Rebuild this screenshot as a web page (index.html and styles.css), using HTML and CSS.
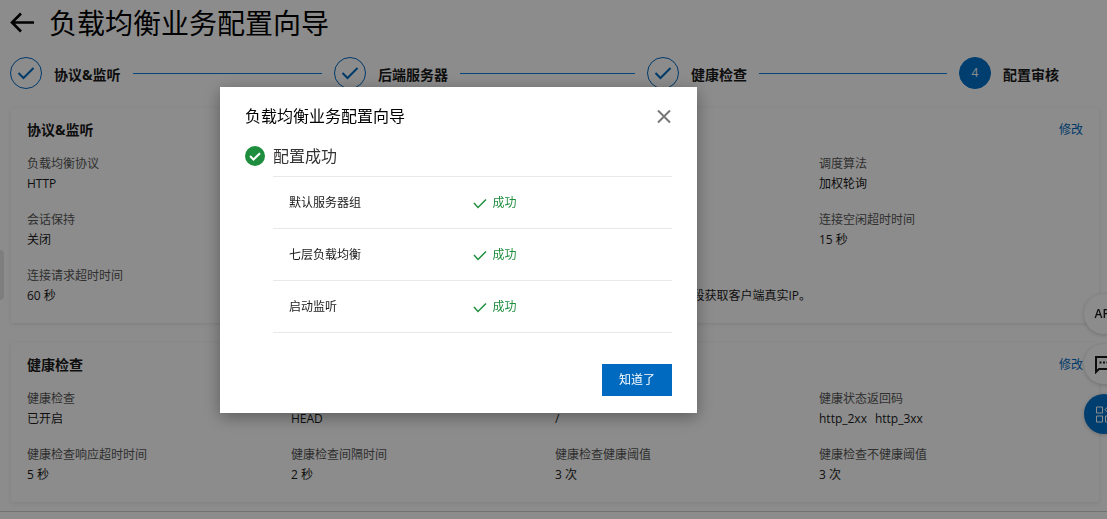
FILE: index.html
```html
<!DOCTYPE html>
<html lang="zh-CN">
<head>
<meta charset="utf-8">
<title>负载均衡业务配置向导</title>
<link rel="stylesheet" href="styles.css">
</head>
<body>
<div class="page">
  <header class="page-header">
    <button class="back" aria-label="返回">
      <svg width="24" height="22" viewBox="0 0 24 22"><path d="M11 1.500 2 10.500l9 9M2 10.500h22" fill="none" stroke="currentColor" stroke-width="2.600"/></svg>
    </button>
    <h1 class="page-title">负载均衡业务配置向导</h1>
  </header>

  <ol class="steps">
    <li class="step">
      <span class="step-mark"><svg width="18" height="14" viewBox="0 0 18 14"><path d="M1.5 7 6.500 12 16.500 2" fill="none" stroke="currentColor" stroke-width="2"/></svg></span>
      <span class="step-label">协议&amp;监听</span><span class="step-line"></span>
    </li>
    <li class="step">
      <span class="step-mark"><svg width="18" height="14" viewBox="0 0 18 14"><path d="M1.5 7 6.500 12 16.500 2" fill="none" stroke="currentColor" stroke-width="2"/></svg></span>
      <span class="step-label">后端服务器</span><span class="step-line"></span>
    </li>
    <li class="step">
      <span class="step-mark"><svg width="18" height="14" viewBox="0 0 18 14"><path d="M1.5 7 6.500 12 16.500 2" fill="none" stroke="currentColor" stroke-width="2"/></svg></span>
      <span class="step-label">健康检查</span><span class="step-line"></span>
    </li>
    <li class="step">
      <span class="step-mark current">4</span>
      <span class="step-label">配置审核</span>
    </li>
  </ol>

  <main class="cards">
    <section class="card">
      <div class="card-head"><h2 class="card-title">协议&amp;监听</h2><a class="link" href="#">修改</a></div>
      <dl class="fields">
        <div class="field first"><dt>负载均衡协议</dt><dd>HTTP</dd></div>
        <div class="field last"><dt>调度算法</dt><dd>加权轮询</dd></div>
        <div class="field first"><dt>会话保持</dt><dd>关闭</dd></div>
        <div class="field last"><dt>连接空闲超时时间</dt><dd>15 秒</dd></div>
        <div class="field first"><dt>连接请求超时时间</dt><dd>60 秒</dd></div>
        <div class="field note"><dt>&nbsp;</dt><dd>字段获取客户端真实IP。</dd></div>
      </dl>
    </section>
    <section class="card">
      <div class="card-head"><h2 class="card-title">健康检查</h2><a class="link" href="#">修改</a></div>
      <dl class="fields">
        <div class="field"><dt>健康检查</dt><dd>已开启</dd></div>
        <div class="field"><dt>&nbsp;</dt><dd>HEAD</dd></div>
        <div class="field"><dt>&nbsp;</dt><dd>/</dd></div>
        <div class="field"><dt>健康状态返回码</dt><dd class="codes"><span>http_2xx</span><span>http_3xx</span></dd></div>
        <div class="field"><dt>健康检查响应超时时间</dt><dd>5 秒</dd></div>
        <div class="field"><dt>健康检查间隔时间</dt><dd>2 秒</dd></div>
        <div class="field"><dt>健康检查健康阈值</dt><dd>3 次</dd></div>
        <div class="field"><dt>健康检查不健康阈值</dt><dd>3 次</dd></div>
      </dl>
    </section>
  </main>
  <footer class="page-footer"></footer>
</div>

<div class="drawer-handle"></div>
<div class="fabs">
  <button class="fab api">API</button>
  <button class="fab" aria-label="反馈">
    <svg width="20" height="20" viewBox="0 0 20 20"><path d="M2 18V3h16v12H5z" fill="none" stroke="currentColor" stroke-width="2"/><path d="M5.500 8.500h2m1.500 0h2m1.500 0h2" stroke="currentColor" stroke-width="2"/></svg>
  </button>
  <button class="fab primary" aria-label="应用">
    <svg width="18" height="18" viewBox="0 0 18 18" fill="none" stroke="currentColor"><path d="M1.500 2h6v6h-6zM1.500 11h6v6h-6zM10.500 11h6v6h-6zM13.500 1l3.500 3.700-3.500 3.700L10 4.700z"/></svg>
  </button>
</div>

<div class="overlay">
  <div class="dialog" role="dialog" aria-modal="true" aria-labelledby="dialog-title">
    <div class="dialog-head">
      <h2 class="dialog-title" id="dialog-title">负载均衡业务配置向导</h2>
      <button class="close" aria-label="关闭">
        <svg width="16" height="16" viewBox="0 0 16 16"><path d="m2 2.500 12 12M14 2.500 2 14.500" fill="none" stroke="currentColor" stroke-width="2"/></svg>
      </button>
    </div>
    <div class="result">
      <svg width="20" height="20" viewBox="0 0 20 20"><circle cx="10" cy="10" r="10" fill="#1e8e3e"/><path d="m5 10 3.500 3.500L15 7.200" fill="none" stroke="#fff" stroke-width="2"/></svg>
      <span>配置成功</span>
    </div>
    <table class="results">
      <tr><td class="name">默认服务器组</td><td><span class="ok"><svg width="14" height="12" viewBox="0 0 14 12"><path d="m1 6 4 4.500 8-8" fill="none" stroke="currentColor" stroke-width="1.500"/></svg>成功</span></td></tr>
      <tr><td class="name">七层负载均衡</td><td><span class="ok"><svg width="14" height="12" viewBox="0 0 14 12"><path d="m1 6 4 4.500 8-8" fill="none" stroke="currentColor" stroke-width="1.500"/></svg>成功</span></td></tr>
      <tr><td class="name">启动监听</td><td><span class="ok"><svg width="14" height="12" viewBox="0 0 14 12"><path d="m1 6 4 4.500 8-8" fill="none" stroke="currentColor" stroke-width="1.500"/></svg>成功</span></td></tr>
    </table>
    <div class="dialog-foot"><button class="confirm">知道了</button></div>
  </div>
</div>
</body>
</html>
```
FILE: styles.css
```css
* { box-sizing: border-box; }

body {
  margin: 0;
  background: #fff;
  color: #1a1a1a;
  font: 12px/20px "Open Sans", "Noto Sans CJK SC", sans-serif;
}

h1, h2, dl, dd, ol { margin: 0; padding: 0; }

button {
  border: 0;
  padding: 0;
  background: none;
  color: inherit;
  font: inherit;
}

.page { overflow: hidden; }

.page-header {
  display: flex;
  align-items: center;
  gap: 15px;
  height: 44px;
  padding: 2px 10px 0;
}

.back { display: flex; color: #000; }

.page-title { font-size: 28px; line-height: 40px; font-weight: 400; color: #000; }

.steps {
  display: grid;
  grid-template-columns: 324fr 313fr 312fr 138fr;
  padding: 13px 10px 0;
  list-style: none;
}

.step { display: flex; align-items: center; gap: 12px; padding-right: 12px; }

.step-mark {
  display: flex;
  flex: none;
  align-items: center;
  justify-content: center;
  width: 32px;
  height: 32px;
  border: 1px solid #006ac1;
  border-radius: 50%;
  color: #006ac1;
}

.step-mark.current { background: #0072cc; border-color: #0072cc; color: #fff; }

.step-label {
  flex: none;
  padding-top: 3px;
  font-size: 14px;
  font-weight: 700;
}

.step-line { flex: 1; height: 1px; background: #0a7fe0; }

.cards { display: grid; gap: 20px; padding: 19px 8px 9px 11px; }

.card {
  padding: 12px 16px 17px;
  background: #fff;
  border-radius: 2px;
  box-shadow: 0 1px 4px rgba(0, 0, 0, .1);
}

.card-head { display: flex; justify-content: space-between; margin-bottom: 14px; }

.card-title { font-size: 14px; line-height: 20px; font-weight: 700; }

.link { color: #006ac1; text-decoration: none; }

.fields { display: grid; grid-template-columns: repeat(4, 1fr); row-gap: 16px; }

.field dt { color: #575757; }

.first { grid-column: 1; }
.last { grid-column: 4; }
.note { grid-column: 2 / 4; justify-self: end; padding-right: 8px; }

.codes { display: flex; gap: 8px; }

.page-footer { height: 9px; border-top: 1px solid #d0d0d0; }

.drawer-handle {
  position: fixed;
  left: 0;
  top: 250px;
  width: 4px;
  height: 50px;
  border-radius: 0 4px 4px 0;
  background: #e6e6e6;
}

.fabs {
  position: fixed;
  right: -17px;
  top: 294px;
  display: grid;
  gap: 10px;
}

.fab {
  display: flex;
  align-items: center;
  justify-content: center;
  width: 40px;
  height: 40px;
  border-radius: 50%;
  background: #fff;
  box-shadow: 0 1px 4px rgba(0, 0, 0, .2);
}

.fab.api { font-size: 12px; font-weight: 600; }
.fab.primary { background: #0072cc; color: #fff; }

.overlay {
  position: fixed;
  inset: 0;
  display: flex;
  align-items: flex-start;
  justify-content: center;
  padding: 87px 190px 0 0;
  background: rgba(0, 0, 0, .45);
}

.dialog {
  width: 477px;
  padding: 17px 25px;
  background: #fff;
  box-shadow: 0 4px 16px rgba(0, 0, 0, .35);
}

.dialog-head { display: flex; align-items: center; justify-content: space-between; }

.dialog-title { font-size: 16px; line-height: 24px; font-weight: 400; color: #000; }

.close { display: flex; color: #777; }

.result {
  display: flex;
  align-items: center;
  gap: 8px;
  margin: 16px 0 8px;
  font-size: 16px;
  line-height: 24px;
  color: #333;
}

.results {
  width: calc(100% - 28px);
  margin-left: 28px;
  border-collapse: collapse;
  border-top: 1px solid #e8e8e8;
}

.results td { height: 52px; padding: 0; border-bottom: 1px solid #e8e8e8; }
.results .name { width: 50%; padding-left: 16px; }

.ok { display: flex; align-items: center; gap: 6px; color: #1e8e3e; }

.dialog-foot { display: flex; justify-content: flex-end; margin-top: 31px; }

.confirm { height: 32px; padding: 0 17px; background: #006ac1; color: #fff; }
```
